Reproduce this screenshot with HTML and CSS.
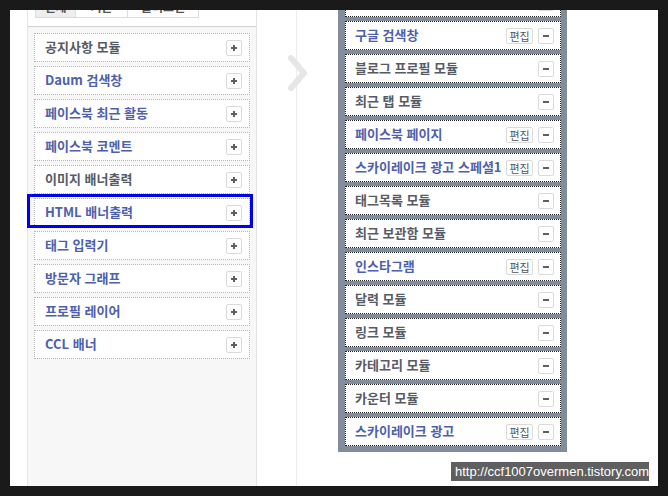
FILE: index.html
```html
<!DOCTYPE html>
<html lang="ko">
<head>
    <meta charset="UTF-8">
    <title>사이드바 모듈 설정</title>
    <link rel="stylesheet" href="styles.css">
</head>
<body>
<div class="screen">
    <div class="canvas">
        <div class="module-panel">
            <div class="tabs-head">
                <ul class="tabs">
                    <li class="tab on"><span>전체</span></li>
                    <li class="tab"><span>기본</span></li>
                    <li class="tab"><span>플러그인</span></li>
                </ul>
            </div>
            <ul class="module-list">
                <li class="module"><span class="name">공지사항 모듈</span><span class="btn-add"></span></li>
                <li class="module plugin"><span class="name">Daum 검색창</span><span class="btn-add"></span></li>
                <li class="module plugin"><span class="name">페이스북 최근 활동</span><span class="btn-add"></span></li>
                <li class="module plugin"><span class="name">페이스북 코멘트</span><span class="btn-add"></span></li>
                <li class="module"><span class="name">이미지 배너출력</span><span class="btn-add"></span></li>
                <li class="module plugin"><span class="name">HTML 배너출력</span><span class="btn-add"></span></li>
                <li class="module plugin"><span class="name">태그 입력기</span><span class="btn-add"></span></li>
                <li class="module plugin"><span class="name">방문자 그래프</span><span class="btn-add"></span></li>
                <li class="module plugin"><span class="name">프로필 레이어</span><span class="btn-add"></span></li>
                <li class="module plugin"><span class="name">CCL 배너</span><span class="btn-add"></span></li>
            </ul>
        </div>
        <div class="middle"></div>
        <div class="sidebar">
            <ul class="sidebar-list">
                <li class="slot"><span class="name">카테고리</span><span class="btn-del"></span></li>
                <li class="slot plugin"><span class="name">구글 검색창</span><span class="tools"><span class="btn-edit">편집</span><span class="btn-del"></span></span></li>
                <li class="slot"><span class="name">블로그 프로필 모듈</span><span class="tools"><span class="btn-del"></span></span></li>
                <li class="slot"><span class="name">최근 탭 모듈</span><span class="tools"><span class="btn-del"></span></span></li>
                <li class="slot plugin"><span class="name">페이스북 페이지</span><span class="tools"><span class="btn-edit">편집</span><span class="btn-del"></span></span></li>
                <li class="slot plugin"><span class="name">스카이레이크 광고 스페셜1</span><span class="tools"><span class="btn-edit">편집</span><span class="btn-del"></span></span></li>
                <li class="slot"><span class="name">태그목록 모듈</span><span class="tools"><span class="btn-del"></span></span></li>
                <li class="slot"><span class="name">최근 보관함 모듈</span><span class="tools"><span class="btn-del"></span></span></li>
                <li class="slot plugin"><span class="name">인스타그램</span><span class="tools"><span class="btn-edit">편집</span><span class="btn-del"></span></span></li>
                <li class="slot"><span class="name">달력 모듈</span><span class="tools"><span class="btn-del"></span></span></li>
                <li class="slot"><span class="name">링크 모듈</span><span class="tools"><span class="btn-del"></span></span></li>
                <li class="slot"><span class="name">카테고리 모듈</span><span class="tools"><span class="btn-del"></span></span></li>
                <li class="slot"><span class="name">카운터 모듈</span><span class="tools"><span class="btn-del"></span></span></li>
                <li class="slot plugin"><span class="name">스카이레이크 광고</span><span class="tools"><span class="btn-edit">편집</span><span class="btn-del"></span></span></li>
            </ul>
        </div>

        <svg class="arrow" width="22" height="36" viewBox="0 0 22 36">
            <polyline points="4,3 17,18 4,33" fill="none" stroke="#e6e6e6" stroke-width="6" stroke-linecap="round" stroke-linejoin="round"/>
        </svg>
        <div class="highlight"></div>
        <div class="watermark">http://ccf1007overmen.tistory.com</div>
    </div>
</div>
</body>
</html>
```

FILE: styles.css
```css
*{
    margin:0;padding:0;
    box-sizing: border-box;
}
body{
    background:#1a1a1a;
    font-family: "Noto Sans CJK KR", "Noto Sans", sans-serif;
}
ul{
    list-style: none;
}
.screen{
    width:668px;
    height:496px;
    padding:10px;
    background:#1a1a1a;
}
.canvas{
    position: relative;
    width:648px;
    height:476px;
    background:#fff;
    display: flex;
    padding-left:17px;
    overflow: hidden;
}

/* left: module pool */
.module-panel{
    width:230px;
    height:100%;
    background:#f7f7f7;
    border-left:1px solid #e4e4e4;
    border-right:1px solid #e4e4e4;
}
.tabs-head{
    height:17px;
    background:#fff;
    border-bottom:1px solid #d2d2d2;
    padding-left:7px;
}
.tabs{
    display: flex;
    height:8px;
}
.tab{
    height:8px;
    overflow: hidden;
    border:1px solid #dcdcdc;
    border-top:none;
    border-left:none;
    text-align: center;
    font-size:12px;
    font-weight: bold;
    color:#555;
}
.tab:first-child{
    border-left:1px solid #dcdcdc;
}
.tab span{
    display: block;
    line-height:16px;
    margin-top:-11px;
}
.tab.on{ width:41px; background:#eee; }
.tab:nth-child(2){ width:52px; }
.tab:nth-child(3){ width:71px; }

.module-list{
    padding:6px 6px;
    display: flex;
    flex-direction: column;
    gap:4px;
}
.module{
    height:29px;
    background:#fff;
    border:1px dotted #b4b4b4;
    display: flex;
    align-items: center;
    justify-content: space-between;
    padding:0 7px 0 10px;
}
.name{
    font-size:13px;
    font-weight: bold;
    color:#575b66;
    white-space: nowrap;
    margin-bottom:2px;
}
.plugin .name{
    color:#4d5fad;
}
.btn-add,.btn-del{
    position: relative;
    width:16px;
    height:16px;
    background:#fff;
    border:1px solid #dadada;
    border-radius:2px;
}
.btn-add::before,.btn-del::before{
    content:"";
    position: absolute;
    left:4px;
    top:6px;
    width:6px;
    height:2px;
    background:#5f5f5f;
}
.btn-add::after{
    content:"";
    position: absolute;
    left:6px;
    top:4px;
    width:2px;
    height:6px;
    background:#5f5f5f;
}

/* middle gutter */
.middle{
    width:40px;
    height:100%;
    border-right:1px solid #ececec;
}
.arrow{
    position: absolute;
    left:277px;
    top:45px;
}

/* right: sidebar */
.sidebar{
    margin-left:41px;
    width:229px;
    height:442px;
    background:#838c9a;
    padding:0 6px 0 7px;
    overflow: hidden;
}
.sidebar-list{
    margin-top:-22px;
    display: flex;
    flex-direction: column;
    gap:4px;
}
.slot{
    height:29px;
    background:#fff;
    border:1px dotted #222;
    display: flex;
    align-items: center;
    justify-content: space-between;
    padding:0 6px 0 9px;
}
.tools{
    display: flex;
    gap:5px;
}
.btn-edit{
    width:27px;
    height:16px;
    border:1px solid #dadada;
    border-radius:2px;
    font-size:11px;
    line-height:14px;
    text-align: center;
    color:#555;
}

/* overlays */
.highlight{
    position: absolute;
    left:17px;
    top:184px;
    width:226px;
    height:34px;
    border:3px solid #0000f0;
}
.watermark{
    position: absolute;
    right:9px;
    bottom:5px;
    width:198px;
    height:19px;
    background:#5f5f5f;
    color:#fff;
    font-family: "Liberation Sans", sans-serif;
    font-size:13px;
    line-height:19px;
    padding-left:4px;
    white-space: nowrap;
    overflow: hidden;
}
```
